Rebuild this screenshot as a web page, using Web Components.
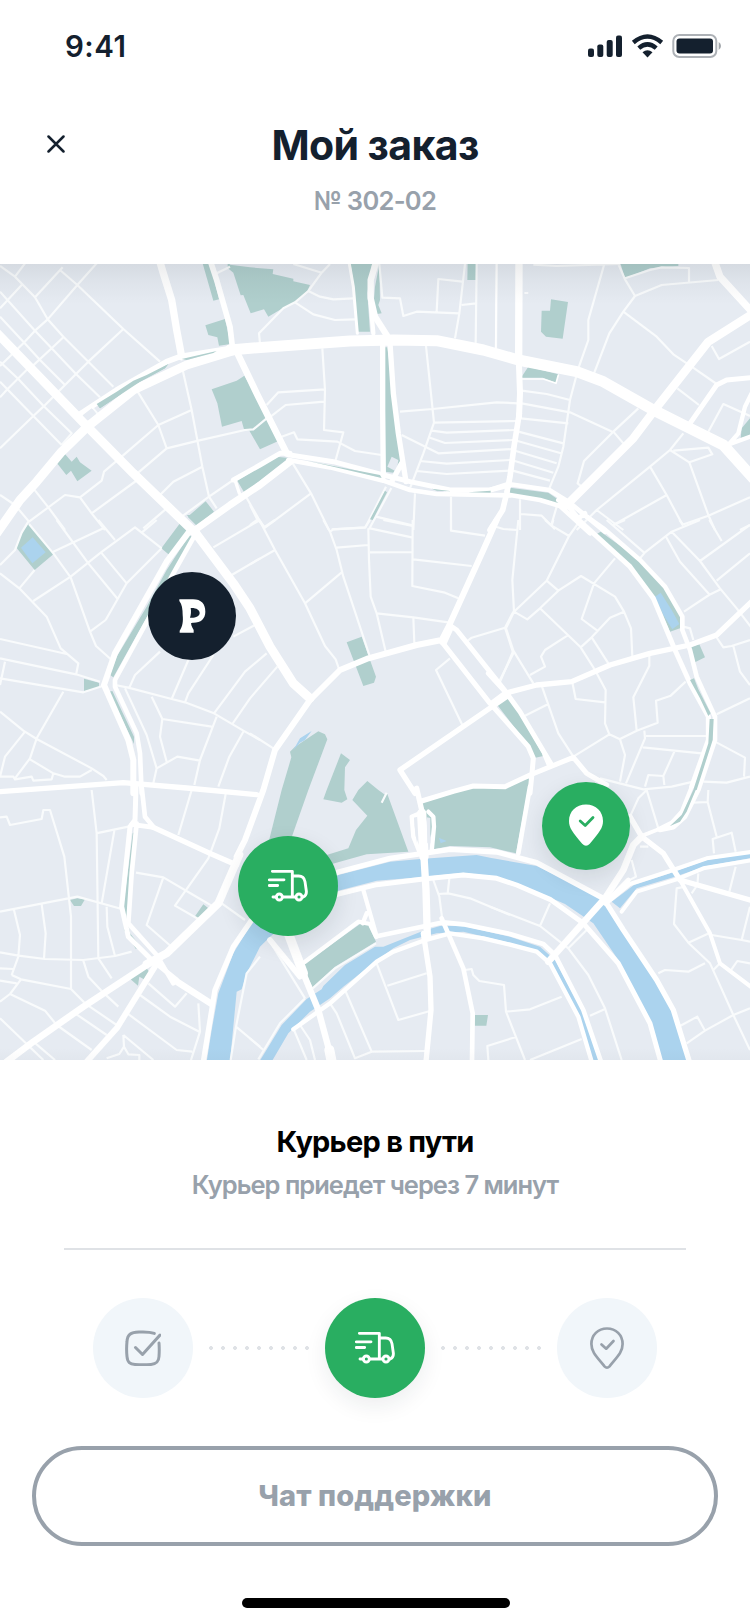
<!DOCTYPE html>
<html lang="ru">
<head>
<meta charset="utf-8">
<title>Мой заказ</title>
<style>
html,body{margin:0;background:#fff}
body{width:750px;height:1624px;overflow:hidden;font-family:Inter,"Liberation Sans",sans-serif;color:#14202e}
</style>
</head>
<body>
<order-screen></order-screen>
<script>
const define = (name, html, setup) => customElements.define(name, class extends HTMLElement {
  constructor() {
    super();
    this.attachShadow({mode: 'open'}).innerHTML = html;
  }
  connectedCallback() { if (setup) setup(this, this.shadowRoot); }
});

/* Icons */
const ICONS = {
  truck: `<svg width="40" height="34" viewBox="54 237 120 102" fill="none" stroke="currentColor" stroke-width="8.6" stroke-linecap="round" stroke-linejoin="round"><path d="M67 244H127V320M127 258H146C158 258 163 264 165 275L169 303C170 313 167 318 160 321M58 269.500H102M58 286.500H83M69 321H79M97 321H137"/><circle cx="88" cy="321" r="9"/><circle cx="147" cy="321" r="9"/></svg>`,
  pinFull: `<svg width="34" height="42" viewBox="0 0 34 42"><path fill="currentColor" d="M17 .5C27 .5 34 7.500 34 17C34 24 30.500 28 20.800 39.800Q17 43.500 13.200 39.800C3.500 28 0 24 0 17C0 7.500 7 .5 17 .5Z"/><path d="M11.200 17L16.200 21.500L24 13.500" fill="none" stroke="#29ae61" stroke-width="2.800" stroke-linecap="round" stroke-linejoin="round"/></svg>`,
  pin: `<svg width="34" height="42" viewBox="0 0 34 42" fill="none" stroke="currentColor" stroke-width="2.700" stroke-linecap="round" stroke-linejoin="round"><path d="M17 1.500C26 1.500 32.600 8 32.600 17C32.600 25 27.500 29.500 19.500 39.300Q17 42 14.500 39.300C6.500 29.500 1.400 25 1.400 17C1.400 8 8 1.500 17 1.500Z"/><path d="M11.500 17.500L16.200 21.700L23.500 14"/></svg>`,
  check: `<svg width="36" height="36" viewBox="0 0 36 36" fill="none" stroke="currentColor" stroke-width="3" stroke-linecap="round" stroke-linejoin="round"><path d="M29.300 3.400Q24 1.500 14 2C5.500 2.300 2.500 4.500 2 11.500Q1.200 19 2 26.500C2.500 32.500 5 34 10 34.400Q18 35.200 26 34.400C31.500 34 33.700 32 34 26.500Q34.500 19.500 34 13"/><path d="M10.500 17.500L17.500 24.500L35 5"/></svg>`,
  brand: `<svg width="27" height="34" viewBox="536 237 81 102"><path fill="currentColor" fill-rule="evenodd" d="M537 238H578C603 238 615 252 615 275C615 297 600 309 577 308L572 310C573 320 578 326 580 330V338H538V332C547 320 549 303 547 285C547 268 545 253 537 243ZM571 264C588 263 598 270 598 279C598 289 586 294 569 293C572 285 573 273 571 264Z"/></svg>`
};

/* The map is drawn on a 3x3 sheet grid; every sheet has its own origin. */
const SHEETS = {A:[0,780],B:[750,780],C:[1470,780],D:[0,1560],E:[750,1560],F:[1470,1560],G:[0,2370],H:[750,2370],I:[1470,2370]};
const PARKS = {
A:`M290 432L350 395L400 362L440 345L505 312L495 325L420 365L300 445ZM605 0H628L657 118L640 122ZM616 196L675 177L692 252L657 257L652 232L625 225ZM635 388L710 362L733 347L765 402L805 465L842 540L780 568L748 512L732 508L725 483L666 500L652 430ZM683 0L690 14L750 22L820 28L818 42L880 56L880 64L930 75L922 93L885 127L848 145L805 170L792 148L752 160L730 105L722 106L700 38L683 24ZM170 608L195 582L215 605L230 590L240 607L275 632L232 664L213 632L199 645ZM712 662L830 590L866 594L750 685L733 698ZM563 770L617 724L642 755L590 797Z`,
B:`M300 0H368L352 100L360 215H322L312 80ZM388 12L390 120L385 135L395 160L382 162L370 140L375 80ZM653 0H680V60H652ZM405 262H412L445 500L452 600L430 638L405 635Z`,
C:`M183 118L234 126L218 236L168 230L153 215L155 152H180ZM115 320L205 343L198 368L158 353H93ZM388 0H565V18L480 25L405 55ZM800 460L780 475L755 505L752 535L800 520ZM60 683L175 698L225 733L215 737L130 715L60 702Z`,
D:`M85 12L160 103L104 150L48 82L65 38ZM540 10L563 30L508 105L484 85ZM560 -15H620L595 14ZM568 45L577 52L430 310L340 472L330 465L350 410L440 260L500 150ZM252 476L297 488V502L252 514ZM327 515L337 513L402 650V672Z`,
E:`M290 367L335 350L378 470L372 488L340 498ZM120 695L135 680L205 634L225 643L232 658L175 810L115 980L55 970L95 810L124 712ZM273 700L300 720L285 742L283 810L292 838L275 848L220 838L230 810Z`,
F:`M22 555L55 533L90 580L160 708L133 714L110 670ZM320 42L332 35L450 120L525 200L570 285V325L540 335L495 235L410 135ZM600 380L628 373L645 412L615 427L624 470Z`,
G:`M398 130L405 125L380 380L390 430L418 465L408 478L372 420L370 350ZM210 330L232 325L255 328L243 348H222ZM583 382L610 343L629 358L602 391ZM385 562L438 532L447 545L432 568L418 560L414 587Z`,
H:`M307 30L325 0L352 -27L385 0L405 14L412 12L475 185L350 193L235 225L230 195L295 175L318 120L352 77ZM515 35L660 -8L760 -14L840 -35L798 190L720 172L600 168L552 178ZM165 520L330 402L355 405L378 455L255 530L188 592L165 545ZM675 675H714L709 707H674Z`
};
const WATER = {
D:`M98 52L137 97L97 130L63 83Z`,
E:`M130 690L150 655L185 633L165 660L150 668Z`,
F:`M495 230L512 218L545 270L568 312L547 328L520 285Z`,
H:`M5 400L120 300L265 255L420 215L510 207L680 195L720 203L860 228L1050 320L1105 385L1220 560L1280 700L1312 815H1238L1200 700L1105 510L1030 400L945 342L790 275L720 258L640 248L510 262L380 272L265 302L150 370L60 440L30 470L-10 550L-25 598L-40 605L-60 815H-130L-115 720L-95 610L-50 490ZM28 815L95 705L170 627L215 598L220 588L285 525L375 470H400L520 422L570 408H640L780 440L870 470L915 510L1000 670L1048 815H1028L985 675L905 530L870 490L780 458L640 425L560 430L480 450L430 475L370 520L280 590L240 625L180 665L115 730L65 815ZM567 143L575 147L590 153L572 160Z`,
I:`M365 335L432 285L540 250L650 210L780 190V205L650 228L550 262L440 295L390 355Z`
};
const LANES = {
A:`M0 18L45 50L105 112L143 178L190 230L340 380M75 10L45 50M0 95L105 212L155 265L228 342L300 412M0 170L70 245L120 300L195 375M0 145L65 75M188 22L105 112M180 30L232 75L370 207L480 305M290 10L232 75L143 178L105 212L70 250L0 318M190 232L155 265L90 325M370 207L265 305L228 342L130 440L100 468L0 565M0 305L55 357L130 437L215 520L185 555M85 325L22 388L0 412M0 365L22 388L100 468L185 555M275 440L300 470M413 395L475 495L500 565L412 640M475 495L575 450M475 495L365 590L312 635L305 662L240 712L195 705L87 785L45 735L0 705M500 565L595 542L735 510L760 508L800 475M548 330L575 450L607 620L627 710L650 745M607 620L520 665L480 705M100 685L145 742L195 810M240 712L275 760L315 810M275 760L412 660M500 745L430 805M545 770L627 710L700 660M735 705L775 775L795 805M650 40L690 20`,
B:`M130 12L215 38L240 12M215 38L175 93L135 127L100 145L27 220L30 250M175 93L210 110L250 118L310 115M135 127L190 163L255 180L315 178M388 12L397 113L450 115L460 168L500 155L628 160M560 155L565 57L637 65M645 12L628 160L615 235M635 135L678 130M680 12L677 250M740 12L738 265M217 265L225 390L222 510L280 517L257 600M225 388L85 397L50 435M222 425L107 435L55 475M95 530L132 517L142 538L262 545L315 573L395 585M125 605L183 700L237 810M183 700L45 803L20 775L0 735M0 795L20 780M408 680L345 805M424 684L357 808M378 770L490 797M495 700L490 810M603 710V810M245 808L345 803M528 258L552 488L520 580L480 685M450 455L548 447L740 427L805 430M552 488L805 483M545 512L590 518L795 510M540 533L585 549L790 540M455 525L565 580L790 567M510 603L590 611L780 600M500 633L590 642L780 632`,
C:`M130 14L200 18L390 12M343 12L295 180V240L265 325L240 420L220 560L205 620L178 685M385 12L405 58L435 108L400 155L358 220L312 340M435 108L515 75L685 60M405 55L480 30L515 22L597 24V65M400 155L500 230L550 283L605 320L680 372M562 385L627 435M665 258L687 297L780 245M655 515L700 432L780 468M445 445L370 515L282 603L263 670L275 680M370 515L400 550M95 430L240 457L370 517M95 392L170 402L240 420M92 475L235 490M85 515L220 550M80 542L213 580M75 572L200 610M72 602L190 638M68 632L180 662M580 520L540 570L480 620L320 750L260 810M540 570L598 607L667 583L655 563L550 572M598 607L655 765L675 810M480 620L530 705L578 795M530 705L370 795M780 712L655 767L575 795M320 750L400 810M780 795L750 810M90 718V810M92 762L155 767L195 808M200 740L183 798`,
D:`M87 12L160 100L212 172L270 335L288 378L335 420M0 135L45 90L65 38L85 5M0 160L58 205L140 290L182 385L235 430L228 465M58 205L104 150M100 243L212 170L303 97L405 22L485 85M160 95L310 25M170 0L265 130L353 237M295 0L345 60M303 97L380 190M317 300L270 335M317 300L380 190L485 85M425 38L470 0M0 357L200 402M0 415L228 463L300 485M0 475L250 517L310 497M15 425L0 495M190 515L110 655L90 715L45 775M0 575L70 632L110 657L275 745L310 768L320 780M75 635L15 710L0 770L40 770L45 778L95 770L100 782L155 778L160 760L195 770H240L275 750M90 718L160 760M640 82L780 0M690 168L780 115M700 350L765 315M345 495L385 503L515 537L555 547L642 580L730 632L780 660M480 395L405 465L388 503M565 420L515 537M640 405L565 520L555 547M375 505L440 645L470 745L460 790M455 530L487 597L480 650L500 725M487 597L635 620M650 590L600 720L583 795M470 745L532 710L600 722M642 580L735 455L800 400M697 612L750 535L832 440M730 635L688 710L655 800`,
E:`M28 0L75 90L165 250L225 378L257 418L268 450M0 133L75 90M45 20L75 0M220 0L240 35L260 90L280 170L358 405M165 250L275 157M240 35L250 28L345 22L360 0M260 83L355 75M355 25L357 120L362 230L380 280L407 395M360 25L485 52M400 0L488 18M488 0L487 198L585 218L625 235M360 97L487 96M490 118L665 138M603 0V32L705 47M380 280L490 292L600 308M490 292L493 370M600 415L558 450L637 615M650 365L665 353L765 323L790 400L745 490M765 323L790 275M0 640L70 685`,
F:`M85 0L67 180L72 275L48 325L70 392L130 490M70 392L28 490M0 15L40 27L82 30M165 0L185 17L237 48L170 182L72 275L112 298L150 265L205 212L273 168L375 230L402 275L423 325L427 410M170 182L205 212M237 48L268 5M185 17L190 0M375 115L312 190L275 297L322 332M402 275L360 293L305 352L272 382L150 265M305 352L355 430M272 382L315 450L347 510L345 610L358 643L390 658L405 705L390 785M232 347L165 390L153 410L165 440L120 465M350 0L465 100M370 15L405 0M450 115L465 97L545 35L630 0M568 0L580 15M528 50L570 125L657 222M545 35L630 123L690 205L740 265L790 330M658 0L695 63M630 123L780 15M680 182L780 100M582 275L657 225L692 208M580 320L600 325L610 360M675 345L700 382L725 378L780 360M730 378L750 455L780 495M680 583L780 535M478 405V437L430 532L440 632L390 657M587 485L542 527L498 542L503 608L440 632M463 632L465 655L408 790M468 648H650M458 682L635 700M553 695L520 768L475 765L465 800M520 768L523 795M358 643L250 710L205 640L155 497M247 487L257 537L345 547M175 552L105 587M330 775L460 808L545 800L610 785M675 665L765 713L762 770M640 785L710 788L780 770`,
G:`M275 0L290 130L295 505M288 130L385 110M343 122L305 340M0 82L20 80L30 105L125 87L130 60H150L193 200L213 380V597M0 365L232 320L365 357M42 360L60 435L55 500L35 555M125 343L137 430L132 505M0 487L55 497L135 507L250 510L345 498L395 485M320 350L322 410L345 498M250 512L265 560L310 608M295 505L335 565M0 535L40 537M0 572L50 580M35 555L63 568L213 597L255 640L350 705M0 635L30 612L63 568M30 612L135 662L170 705L275 780M0 685L130 810M100 755L165 810M225 670L320 735M310 608L355 650M375 665L530 780L577 785M420 615L510 680L598 725M595 640L600 725L573 810M445 580L525 650L560 610M370 735L372 770L358 792L320 805M372 770L385 793L418 795V810M370 735L460 810M408 248L490 262L580 315L640 350M490 262L440 405L512 468M575 0L535 135M677 12L658 115L625 205L525 347L600 390M665 340L735 390M708 710L780 770M780 500L740 550L708 710L692 810`,
H:`M60 455L165 625M0 745L40 780M130 715L170 810M150 705L180 750L195 810M240 640L260 670L315 805L365 785L527 783M285 600L365 785M380 520L445 690L540 663M412 587L530 550M598 265L593 310M565 312L595 310L660 325L780 375M645 540L665 537L670 555L688 573L762 585L768 665L840 658L935 620M768 665L825 810M800 740L712 768L715 810M550 270L568 320L577 390M188 595L255 535L378 460M25 808L90 700L165 625M395 38L410 8`,
I:`M0 350L150 408L235 475L295 555L345 655L395 810M150 408L180 340M300 677L345 657M235 475L290 420M120 810L275 747M420 80L445 25L470 0L505 115M610 38L653 36L655 0M653 36L680 140M672 190L668 147L725 128L737 185M737 230L718 305M425 210L438 260L410 275M625 250L622 285L605 310M585 290L560 295L552 402L595 458L660 520L685 575L730 675L780 780M595 458L657 430M665 435L755 450L780 455M755 450L780 350M670 540L690 520M505 550L525 540L595 545L645 520M720 545L742 513L780 520M570 708L622 680L645 722M590 760L645 722L730 675L780 655M450 170H475`
};
/* [sheet, stroke width, path] */
const ROADS = [
['A',27,'M-10 820L60 720L110 665L185 575L262 500L400 390L560 315L700 272'],
['A',33,'M690 270L760 264L1050 243L1180 240L1310 242L1450 270L1555 300L1730 335L1810 365L1960 450L2070 505L2170 555L2260 655'],
['A',17,'M240 462L350 390L500 305L540 290L700 264'],
['A',27,'M-10 218L262 500L400 640L590 823L700 970L750 1045L810 1160L880 1270L930 1315'],
['A',22,'M478 0L490 40L515 120L530 210L545 290'],
['A',17,'M630 0L650 60L690 200L697 260'],['A',20,'M710 275L770 400L860 580'],
['A',21,'M585 810L690 735L780 675L870 605'],['A',15,'M700 660L780 615L840 580H870'],['A',10,'M705 660L718 700'],
['B',9,'M298 12L310 80L322 220'],['B',19,'M380 0L362 60V115L375 170L410 225'],['B',13,'M362 130L370 220'],
['B',16,'M398 250V450L400 650'],['B',16,'M420 250L430 400L445 520L468 665M455 610L425 665'],
['B',15,'M115 584L250 605L400 645L480 665L600 690H720L780 675'],['B',14,'M115 600L240 622L400 662L480 690L560 702L780 706'],
['C',5,'M20 0L17 265M95 357H160L198 370L205 345M105 99H113'],
['C',22,'M87 0L86 300'],['C',18,'M86 290L90 400L87 470'],['C',17,'M88 460L72 560L60 650L50 700L38 750L0 810'],
['C',14,'M0 690L55 672L178 690L235 725L345 815M60 705L150 720L210 738L300 820M205 720L240 745L265 775L285 760'],
['C',25,'M235 730L430 535L490 455L655 245L790 160'],['C',22,'M672 0L690 50L790 160'],['C',15,'M600 490L680 375L710 360L790 352'],['C',13,'M715 555L745 520L765 440L785 400M720 552L780 530'],
['D',18,'M575 25L500 125L345 400L312 495L385 660L400 720V820'],['D',14,'M582 50L520 160L345 480V500L410 640L420 700L425 820'],
['E',18,'M740 0L700 90L598 315L575 360L500 375L355 415L270 450L180 540L75 690L40 810L-15 960L-40 1010'],
['E',15,'M598 315L620 330L775 525M575 365L720 550'],['E',24,'M598 325L580 365'],
['E',16,'M495 820L450 750L770 530'],
['F',16,'M5 550L45 520L140 495L245 485L360 435L480 400L600 375L680 345L790 240'],
['F',15,'M-5 460L50 520L90 575L185 735'],['F',15,'M5 555L115 680L130 715L125 770L120 820'],
['F',15,'M-205 843L-110 814L-50 798L45 800L120 765L250 712L290 760L350 795M165 705L180 740'],
['F',15,'M255 -10L420 140L490 235L555 390L600 490L655 590V660L605 800'],
['F',14,'M290 -10L340 25L450 120L525 200L577 290V330L600 390L620 470L675 590V660L625 810L585 890L550 922L510 930'],
['I',12,'M605 -10L575 65L545 98L500 120L450 140'],
['G',16,'M0 5L370 -22L560 -6L770 14'],
['G',15,'M408 -10L405 90L390 110L365 350L385 440L450 505L530 570'],['G',20,'M520 568L635 642'],
['G',14,'M425 -10L435 80L460 110M410 100L395 250L385 400L470 495L520 580M395 103L460 112'],['G',16,'M460 112L630 190L710 225'],
['G',24,'M718 195L655 340L500 490L440 522'],['G',20,'M460 512L250 650L100 755L20 815'],['G',18,'M480 505L350 715L260 815'],
['G',16,'M610 815L645 600L700 470L755 390'],
['H',16,'M200 272L265 246L420 205L500 193L600 178L740 186L860 218L1060 325L1120 420L1220 570L1270 660L1318 815'],
['H',15,'M200 330L265 312L380 284L520 267L640 255L740 265L800 285L900 328L1000 400L1105 520L1200 700L1232 815'],
['H',14,'M380 439L580 397L640 403L780 432L880 462L915 495L1000 660L1053 815'],
['H',13,'M130 718L240 640L380 515L430 485L520 452L600 430L700 445L780 464L860 485L900 520L985 680L1025 815'],
['H',28,'M515 70L522 200'],['H',22,'M522 200L528 300L532 440'],['H',16,'M500 -5L515 60M520 430L540 560L543 660L528 815'],
['H',13,'M520 65L485 80L490 140L508 185M535 65L550 80L552 110L545 185'],
['H',14,'M575 385L640 535L668 670L666 815'],['H',13,'M340 300L380 440M165 515L325 395L360 402L378 440M350 370L338 400'],
['H',17,'M60 450L150 560'],['H',28,'M115 430L160 550'],['H',19,'M160 550L205 660L240 790'],['H',30,'M238 780L245 815'],
['I',20,'M175 515L345 325L400 240L430 165L455 140'],['I',14,'M345 340L415 270'],
['I',16,'M420 80L455 140L520 190L570 270L790 333'],['I',12,'M570 270L660 430L690 520L790 596'],
['I',12,'M355 335L420 282L540 243L650 205L790 185M395 365L440 305L560 268L640 235L790 210'],['H',14,'M840 -10L805 190']
];
/* Narrow greens that run along the middle of the boulevards. */
const VERGES = {
A:`M545 297L650 273L640 279L560 300ZM290 432L350 395L400 362L440 345L505 312L495 325L420 365L300 445Z`,
B:`M170 602L390 645L395 654L240 618ZM545 686L605 694L560 692ZM655 697L722 692V698ZM405 692L411 697L368 780L360 778Z`,
F:`M600 480L612 475L625 508L662 580L655 588L630 535ZM659 597H671L668 660L620 810H610L655 670Z`,
I:`M610 0L575 75L540 108L570 95L590 65L617 0Z`
};
const sheets = data => Object.entries(data).map(([k, d]) => `<path transform="translate(${SHEETS[k]})" d="${d}"/>`).join('');

define('city-map', `<style>
:host{display:block;position:relative;width:750px;height:796px;overflow:hidden;background:#e6ebf2}
svg{display:block}
.shade{position:absolute;inset:0;background:linear-gradient(#0f1a2014 0,#0f1a200a 16px,#0f1a2000 40px,#0f1a2000 784px,#0f1a2005 796px)}
</style>
<svg width="750" height="796" viewBox="0 792 2250 2388" stroke-linejoin="round">
<g fill="#b0cfcd">${sheets(PARKS)}</g>
<path transform="translate(750 780)" d="M425 590L445 600L440 635L412 620Z" fill="#e6ebf2"/>
<g fill="#abd3ee">${sheets(WATER)}</g>
<g fill="none" stroke="#f9fbfc" stroke-width="6.500">${sheets(LANES)}</g>
<g fill="none" stroke="#fff" stroke-linecap="round">${ROADS.map(([k, w, d]) => `<path transform="translate(${SHEETS[k]})" stroke-width="${w}" d="${d}"/>`).join('')}</g>
<g fill="#b0cfcd">${sheets(VERGES)}</g>
<path transform="translate(0 780)" d="M248 466L275 445L288 460L262 480Z" fill="#e6ebf2"/>
<path transform="translate(750 2370)" d="M493 82L501 84V160L494 110ZM530 82L541 84V160H532Z" fill="#e6ebf2"/>
</svg>
<div class="shade"></div><slot></slot>`);

define('map-pin', `<style>
:host{position:absolute;display:flex;align-items:center;justify-content:center;width:88px;height:88px;border-radius:50%;background:#29ae61;color:#fff;box-shadow:0 8px 22px #1420301c}
:host([kind=shop]){left:148px;top:308px;background:#14202e;box-shadow:none}
:host([kind=courier]){left:238px;top:572px;width:100px;height:100px}
:host([kind=home]){left:542px;top:518px}
span,svg{display:block}
:host([kind=home]) span{margin-bottom:3px}
</style><span></span>`, (el, root) => {
  root.querySelector('span').innerHTML = ICONS[{shop: 'brand', courier: 'truck', home: 'pinFull'}[el.getAttribute('kind')]];
});

define('status-bar', `<style>
:host{display:flex;height:92px;box-sizing:border-box;padding:29px 29px 0 65px;justify-content:space-between}
b{font-size:29.5px;line-height:34px;font-weight:600;letter-spacing:.5px}
svg{margin-top:4px}
</style><b>9:41</b>
<svg width="134" height="26" viewBox="587 33 134 26" fill="#14202e"><rect x="588" y="48.500" width="6" height="8.500" rx="2"/><rect x="597.300" y="44.500" width="6" height="12.500" rx="2"/><rect x="606.700" y="40" width="6" height="17" rx="2"/><rect x="616" y="35.500" width="6" height="21.500" rx="2"/>
<g fill="none" stroke="#14202e" stroke-width="4.400"><path d="M633.300 42.500Q647.500 30.500 661.700 42.500"/><path d="M638.800 48.200Q647.500 40.500 656.200 48.200"/></g><path d="M642.500 52.200Q647.500 48.200 652.500 52.200L647.500 57.400Z"/>
<rect x="673.300" y="35" width="43" height="22" rx="6" fill="none" stroke="#14202e" stroke-opacity=".35" stroke-width="2"/><rect x="676.500" y="38.500" width="36.500" height="15" rx="3"/><path d="M718.700 42V50Q721 48.500 721 46Q721 43.500 718.700 42Z" opacity=".4"/></svg>`);

define('order-header', `<style>
:host{display:grid;grid-template-columns:112px 1fr 112px;height:172px}
button{all:unset;width:18px;height:18px;margin:43px 0 0 47px}
svg{display:block}
.t{text-align:center;padding-top:25px}
h1{margin:0;font-size:41px;line-height:56px;font-weight:700;letter-spacing:-.6px}
p{margin:12px 0 0;font-size:25.5px;line-height:32px;font-weight:600;letter-spacing:-.7px;color:#98a1ab}
</style><button aria-label="Закрыть"><svg width="18" height="18" viewBox="0 0 18 18" stroke="#14202e" stroke-width="2.500" stroke-linecap="round"><path d="M1.500 1.500L16.500 16.500M16.500 1.500L1.500 16.500"/></svg></button>
<div class="t"><h1><slot name="title"></slot></h1><p><slot name="number"></slot></p></div>`);

define('delivery-status', `<style>
:host{display:block;margin:0 64px;height:190px;box-sizing:border-box;padding-top:64px;text-align:center;border-bottom:2px solid #dfe2e6}
h2{margin:0;font-size:29px;line-height:36px;font-weight:700;color:#000;letter-spacing:-.75px}
p{margin:9px 0 0;font-size:25.5px;line-height:32px;font-weight:600;color:#98a1ab;letter-spacing:-1px}
</style><h2><slot name="state"></slot></h2><p><slot name="eta"></slot></p>`);

define('step-dot', `<style>
:host{display:flex;align-items:center;justify-content:center;width:100px;height:100px;border-radius:50%;background:#f1f6fa;color:#98a1ab}
:host([active]){background:#29ae61;color:#fff;box-shadow:0 8px 22px #14203014}
span,svg{display:block}
</style><span></span>`, (el, root) => {
  root.querySelector('span').innerHTML = ICONS[el.getAttribute('icon')];
});

define('step-track', `<style>
:host{display:flex;align-items:center;justify-content:space-between;margin:48px 93px}
i{display:block;width:100px;height:4px;background:radial-gradient(circle at 2px 2px,#dfe2e6 0 1.700px,#dfe2e600 2.200px) 0 0/12px 4px}
</style><step-dot icon="check"></step-dot><i></i><step-dot icon="truck" active></step-dot><i></i><step-dot icon="pin"></step-dot>`);

define('outline-button', `<style>
:host{display:block;margin:0 32px}
button{display:block;width:100%;height:100px;box-sizing:border-box;border:4px solid #98a1ab;border-radius:50px;background:none;padding:0;font:800 29px/92px Inter,"Liberation Sans",sans-serif;letter-spacing:.1px;color:#98a1ab}
</style><button><slot></slot></button>`);

define('home-bar', `<style>:host{display:block;width:268px;height:10px;margin:52px 0 0 242px;border-radius:5px;background:#000}</style>`);

define('order-screen', `<style>:host{display:block;width:750px;height:1624px;background:#fff;overflow:hidden}</style>
<status-bar></status-bar>
<order-header><span slot="title">Мой заказ</span><span slot="number">№ 302-02</span></order-header>
<city-map><map-pin kind="shop"></map-pin><map-pin kind="courier"></map-pin><map-pin kind="home"></map-pin></city-map>
<delivery-status><span slot="state">Курьер в пути</span><span slot="eta">Курьер приедет через 7 минут</span></delivery-status>
<step-track></step-track>
<outline-button>Чат поддержки</outline-button>
<home-bar></home-bar>`);
</script>
</body>
</html>
